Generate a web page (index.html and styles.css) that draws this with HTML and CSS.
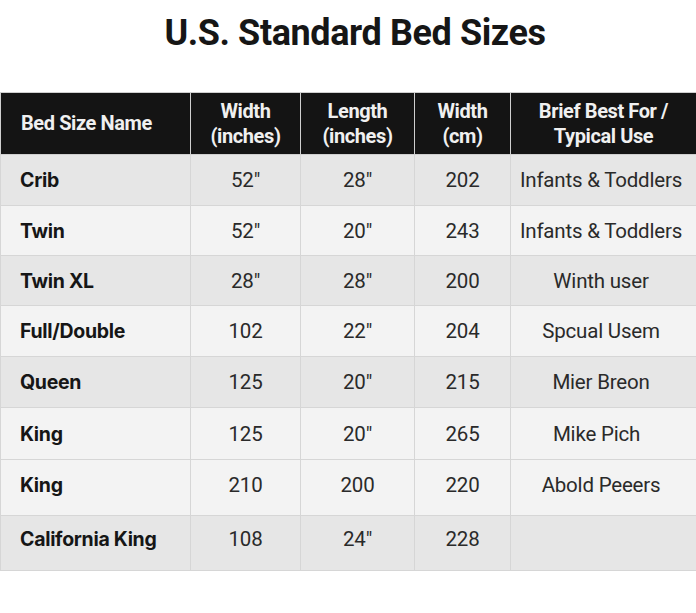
FILE: index.html
```html
<!DOCTYPE html>
<html lang="en">
<head>
<meta charset="utf-8">
<title>U.S. Standard Bed Sizes</title>
<link rel="stylesheet" href="styles.css">
</head>
<body>
<div class="page">
  <h1 class="title">U.S. Standard Bed Sizes</h1>
  <table class="sizes">
    <colgroup>
      <col class="c-name"><col class="c-w"><col class="c-l"><col class="c-cm"><col class="c-use">
    </colgroup>
    <thead>
      <tr>
        <th class="left">Bed Size Name</th>
        <th>Width<br>(inches)</th>
        <th>Length<br>(inches)</th>
        <th>Width<br>(cm)</th>
        <th>Brief Best For /<br>Typical Use</th>
      </tr>
    </thead>
    <tbody>
      <tr class="dark h51"><td class="name">Crib</td><td>52"</td><td>28"</td><td>202</td><td class="use">Infants &amp; Toddlers</td></tr>
      <tr class="light h50"><td class="name">Twin</td><td>52"</td><td>20"</td><td>243</td><td class="use">Infants &amp; Toddlers</td></tr>
      <tr class="dark h50"><td class="name">Twin XL</td><td>28"</td><td>28"</td><td>200</td><td class="use">Winth user</td></tr>
      <tr class="light h51"><td class="name">Full/Double</td><td>102</td><td>22"</td><td>204</td><td class="use">Spcual Usem</td></tr>
      <tr class="dark h51"><td class="name">Queen</td><td>125</td><td>20"</td><td>215</td><td class="use">Mier Breon</td></tr>
      <tr class="light h52"><td class="name">King</td><td>125</td><td>20"</td><td>265</td><td class="use nudge">Mike Pich</td></tr>
      <tr class="light h56"><td class="name">King</td><td>210</td><td>200</td><td>220</td><td class="use">Abold Peeers</td></tr>
      <tr class="dark h55"><td class="name">California King</td><td>108</td><td>24"</td><td>228</td><td class="use"></td></tr>
    </tbody>
  </table>
</div>
</body>
</html>
```
FILE: styles.css
```css
html, body {
  margin: 0;
  padding: 0;
  background: #ffffff;
}
.page {
  width: 696px;
  font-family: Roboto, "Liberation Sans", Arial, sans-serif;
  color: #1a1a1a;
}
.title {
  margin: 0;
  padding: 13px 0 0 14px;
  height: 78px;
  box-sizing: border-box;
  text-align: center;
  font-size: 36px;
  font-weight: 700;
  letter-spacing: -0.4px;
  line-height: 40px;
  color: #161616;
}
.sizes {
  width: 696px;
  border-collapse: collapse;
  table-layout: fixed;
  margin-top: 14px;
}
.c-name { width: 190px; }
.c-w { width: 110px; }
.c-l { width: 114px; }
.c-cm { width: 96px; }
.c-use { width: 186px; }
.sizes th {
  background: #141414;
  color: #f0f0f0;
  font-size: 20px;
  font-weight: 700;
  line-height: 25px;
  height: 62px;
  padding: 0 2px;
  box-sizing: border-box;
  text-align: center;
  border: 1px solid #cfcfcf;
  letter-spacing: -0.4px;
}
.sizes th.left {
  text-align: left;
  padding-left: 20px;
}
.sizes td {
  height: 50px;
  padding: 0;
  box-sizing: border-box;
  text-align: center;
  font-size: 20.5px;
  font-weight: 400;
  color: #2a2a2a;
  border: 1px solid #d6d6d6;
  letter-spacing: -0.2px;
}
.sizes td.use {
  padding-right: 5px;
}
.sizes td.name {
  text-align: left;
  padding-left: 19px;
  font-family: Inter, Roboto, "Liberation Sans", sans-serif;
  font-weight: 700;
  font-size: 19.5px;
  letter-spacing: -0.3px;
  color: #161616;
}
.sizes td.nudge {
  padding-right: 14px;
}
.sizes tr.h50 td { height: 50px; }
.sizes tr.h51 td { height: 51px; }
.sizes tr.h52 td { height: 52px; }
.sizes tr.h55 td { height: 55px; padding-bottom: 9px; }
.sizes tr.h56 td { height: 56px; padding-bottom: 6px; }
.dark td { background: #e6e6e6; }
.light td { background: #f3f3f3; }
```
